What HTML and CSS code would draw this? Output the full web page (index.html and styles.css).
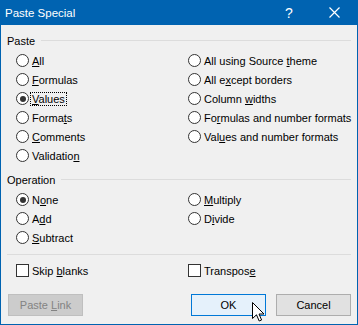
FILE: index.html
```html
<!DOCTYPE html>
<html lang="en">
<head>
    <meta charset="UTF-8">
    <title>Paste Special</title>
    <link rel="stylesheet" href="styles.css">
</head>
<body>
    <div class="window">
        <div class="titlebar">
            <span class="title">Paste Special</span>
            <span class="help">?</span>
            <span class="close">
                <svg width="11" height="11" viewBox="0 0 11 11">
                    <path d="M0.5 0.5 L10.5 10.5 M10.5 0.5 L0.5 10.5" stroke="#fff" stroke-width="1.2" fill="none"/>
                </svg>
            </span>
        </div>
        <div class="content">
            <div class="group-head">
                <span class="group-label">Paste</span>
                <span class="group-line"></span>
            </div>
            <div class="options paste-options">
                <label class="option"><span class="radio"></span><span><u>A</u>ll</span></label>
                <label class="option"><span class="radio"></span><span>All using Source <u>t</u>heme</span></label>
                <label class="option"><span class="radio"></span><span><u>F</u>ormulas</span></label>
                <label class="option"><span class="radio"></span><span>All e<u>x</u>cept borders</span></label>
                <label class="option"><span class="radio checked"></span><span class="focus"><u>V</u>alues</span></label>
                <label class="option"><span class="radio"></span><span>Column <u>w</u>idths</span></label>
                <label class="option"><span class="radio"></span><span>Forma<u>t</u>s</span></label>
                <label class="option"><span class="radio"></span><span>Fo<u>r</u>mulas and number formats</span></label>
                <label class="option"><span class="radio"></span><span><u>C</u>omments</span></label>
                <label class="option"><span class="radio"></span><span>Val<u>u</u>es and number formats</span></label>
                <label class="option"><span class="radio"></span><span>Validatio<u>n</u></span></label>
            </div>

            <div class="group-head op-head">
                <span class="group-label">Operation</span>
                <span class="group-line"></span>
            </div>
            <div class="options">
                <label class="option"><span class="radio checked"></span><span>N<u>o</u>ne</span></label>
                <label class="option"><span class="radio"></span><span><u>M</u>ultiply</span></label>
                <label class="option"><span class="radio"></span><span>A<u>d</u>d</span></label>
                <label class="option"><span class="radio"></span><span>D<u>i</u>vide</span></label>
                <label class="option"><span class="radio"></span><span><u>S</u>ubtract</span></label>
            </div>

            <div class="separator"></div>
            <div class="options checks">
                <label class="option"><span class="checkbox"></span><span>Skip <u>b</u>lanks</span></label>
                <label class="option"><span class="checkbox"></span><span>Transpos<u>e</u></span></label>
            </div>

            <div class="buttons">
                <button class="btn disabled">Paste <u>L</u>ink</button>
                <span class="spacer"></span>
                <button class="btn default">OK</button>
                <button class="btn">Cancel</button>
            </div>
        </div>

        <svg class="cursor" width="13" height="20" viewBox="0 0 13 20">
            <path d="M0.5 0.5 L0.5 16.5 L4.5 12.8 L7.2 19 L9.6 18 L7 12 L12 12 Z" fill="#fff" stroke="#000" stroke-width="1" stroke-linejoin="miter"/>
        </svg>
    </div>
</body>
</html>
```

FILE: styles.css
```css
body {
    margin: 0;
    padding: 0;
    background: #fff;
    font-family: "Liberation Sans", Arial, sans-serif;
    font-size: 11px;
    color: #000;
}
.window {
    position: relative;
    width: 358px;
    height: 325px;
    box-sizing: border-box;
    border: 1px solid #0063b1;
    border-top: none;
    background: #f0f0f0;
}
.titlebar {
    height: 25px;
    background: #0063b1;
    color: #fff;
    display: flex;
    align-items: center;
    margin: 0 -1px;
    padding: 0 0 0 5px;
    font-size: 11.5px;
}
.title {
    flex: 1;
}
.help {
    width: 14px;
    text-align: center;
    margin-right: 33px;
    font-size: 14px;
}
.close {
    width: 11px;
    height: 11px;
    margin-right: 18px;
    display: flex;
}
.content {
    padding: 8px 6px 0 6px;
}
.group-head {
    display: flex;
    align-items: center;
    height: 15px;
    margin-bottom: 3px;
}
.group-label {
    margin-right: 6px;
}
.group-line {
    flex: 1;
    border-top: 1px solid #dcdcdc;
}
.op-head {
    margin-top: 7px;
}
.options {
    display: grid;
    grid-template-columns: 172px 1fr;
    padding-left: 9px;
}
.option {
    display: flex;
    align-items: center;
    height: 19px;
    white-space: nowrap;
}
.radio {
    width: 13px;
    height: 13px;
    box-sizing: border-box;
    border: 1px solid #333;
    border-radius: 50%;
    background: #fff;
    margin-right: 3px;
    display: flex;
    align-items: center;
    justify-content: center;
    flex: none;
}
.radio.checked::after {
    content: "";
    width: 6px;
    height: 6px;
    border-radius: 50%;
    background: #333;
}
.checkbox {
    width: 13px;
    height: 13px;
    box-sizing: border-box;
    border: 1px solid #333;
    background: #fff;
    margin-right: 3px;
    flex: none;
}
.focus {
    outline: 1px dotted #000;
    padding: 0 1px;
    margin-left: -1px;
}
.separator {
    border-top: 1px solid #dcdcdc;
    margin-top: 7px;
}
.checks {
    margin-top: 6px;
}
.buttons {
    display: flex;
    margin-top: 14px;
    padding-left: 1px;
    gap: 10px;
}
.spacer {
    flex: 1;
}
.btn {
    width: 75px;
    height: 22px;
    font-family: inherit;
    font-size: 11px;
    background: #e1e1e1;
    border: 1px solid #adadad;
    color: #000;
    padding: 0;
}
.btn.default {
    background: #e5f1fb;
    border-color: #0078d7;
}
.btn.disabled {
    background: #cccccc;
    border-color: #bfbfbf;
    color: #838383;
}
.cursor {
    position: absolute;
    left: 251px;
    top: 302px;
}
```
